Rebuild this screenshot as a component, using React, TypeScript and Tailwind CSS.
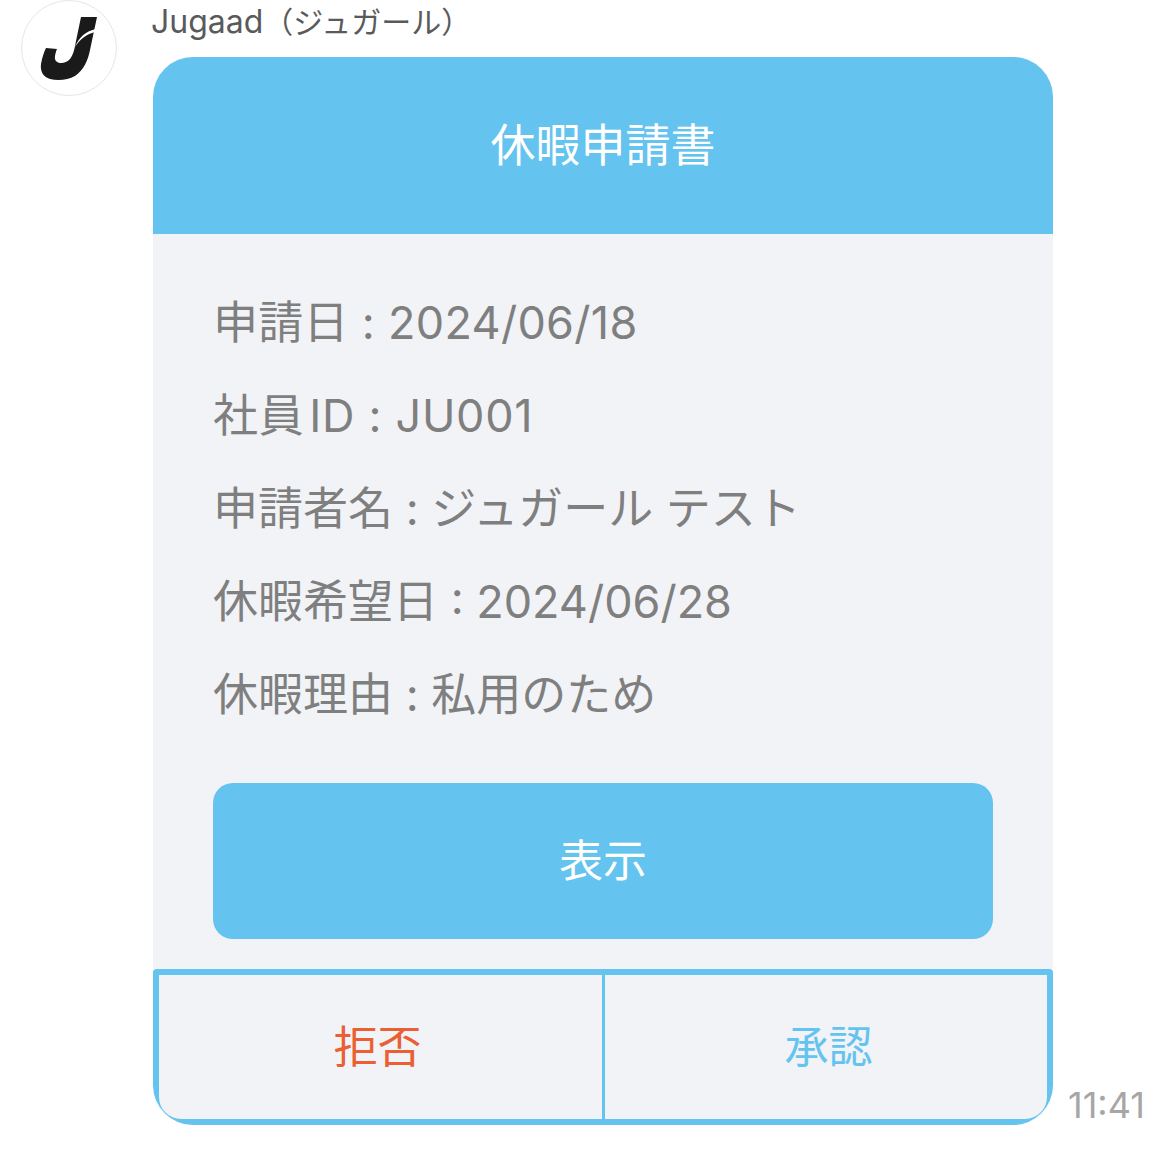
import React from "react";

const font = "font-['Inter','Noto_Sans_CJK_JP',sans-serif]";

const rows = [
  { text: "申請日 : 2024/06/18", cls: "tracking-[0.3px]" },
  { text: "社員\u200aID : JU001", cls: "tracking-[0.7px]" },
  { text: "申請者名 : ジュガール テスト", cls: "" },
  { text: "休暇希望日 : 2024/06/28", cls: "" },
  { text: "休暇理由 : 私用のため", cls: "" },
];

function Logo() {
  return (
    <svg viewBox="22 1 94 94" className="w-[94px] h-[94px]">
      <path
        d="M81 17 L97 17 L90 50 C88 60 84 70 75 76 C68 80 58 81 50 79 C43 77 40 71 41 64 C42 58 44 52 46 48 L57 49 C55 54 54 59 56 61 C58 64 66 64 70 59 C74 54 75 46 76 41 Z"
        fill="#1a1a1a"
      />
      <path d="M96 29 C86 31 79 37 75 47 C80 39 87 34 95 32 Z" fill="#ffffff" />
    </svg>
  );
}

export default function App() {
  return (
    <div className={`${font} w-[1164px] h-[1149px] bg-white overflow-hidden flex items-start pl-[21px] antialiased`}>
      {/* avatar */}
      <div className="w-[96px] h-[96px] shrink-0 rounded-full border border-[#e6e6e6] flex items-center justify-center">
        <Logo />
      </div>

      <div className="ml-[36px] flex flex-col">
        <div className="h-[57px] -ml-[2px] text-[30px] leading-[44px] text-[#5a5a5a]">
          <span className="text-[32px]">Jugaad</span>（ジュガール）
        </div>

        <div className="flex items-end">
          {/* card */}
          <div className="w-[900px] rounded-[40px] overflow-hidden bg-[#f1f3f7]">
            <div className="h-[177px] bg-[#65c3f0] flex items-center justify-center text-white text-[45px] leading-none">
              休暇申請書
            </div>

            <div className="px-[60px] pt-[59px] pb-[30px]">
              <div className="flex flex-col gap-[33px] text-[#7f7f7f] text-[45px] leading-[60px]">
                {rows.map((r) => (
                  <div key={r.text} className={`${r.cls} whitespace-pre`}>
                    {r.text}
                  </div>
                ))}
              </div>

              <button className="mt-[58px] w-full h-[156px] rounded-[20px] bg-[#65c3f0] text-white text-[44px] leading-none">
                表示
              </button>
            </div>

            <div className="h-[156px] flex gap-[3px] p-[6px] bg-[#65c3f0] rounded-t-[4px] text-[44px] leading-none">
              <div className="flex-1 pr-[6px] bg-[#f1f3f7] rounded-bl-[22px] flex items-center justify-center text-[#ea5f33]">拒否</div>
              <div className="flex-1 pl-[5px] bg-[#f1f3f7] rounded-br-[22px] flex items-center justify-center text-[#65c3f0]">承認</div>
            </div>
          </div>

          <div className="ml-[15px] text-[36px] leading-[40px] text-[#a6a6a6]">11:41</div>
        </div>
      </div>
    </div>
  );
}
